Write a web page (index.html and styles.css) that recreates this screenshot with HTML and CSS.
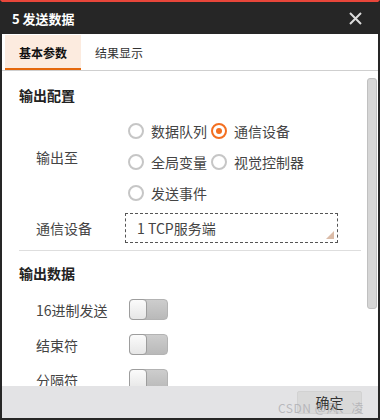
FILE: index.html
```html
<!DOCTYPE html>
<html lang="zh-CN">
<head>
    <meta charset="UTF-8">
    <title>5 发送数据</title>
    <link rel="stylesheet" href="styles.css">
</head>
<body>
    <div class="dialog">
        <div class="titlebar">
            <span class="title">5 发送数据</span>
            <svg class="close" width="13" height="13" viewBox="0 0 13 13">
                <path d="M1 1 L12 12 M12 1 L1 12" stroke="#dcdcdc" stroke-width="2" fill="none"/>
            </svg>
        </div>

        <div class="tabs">
            <div class="tab active">基本参数</div>
            <div class="tab">结果显示</div>
        </div>

        <div class="content">
            <div class="main">
                <div class="section-title">输出配置</div>

                <div class="field">
                    <div class="label">输出至</div>
                    <div class="radios">
                        <div class="radio"><span class="dot"></span>数据队列</div>
                        <div class="radio checked"><span class="dot"></span>通信设备</div>
                        <div class="radio"><span class="dot"></span>全局变量</div>
                        <div class="radio"><span class="dot"></span>视觉控制器</div>
                        <div class="radio"><span class="dot"></span>发送事件</div>
                    </div>
                </div>

                <div class="field select-row">
                    <div class="label">通信设备</div>
                    <div class="select">
                        <span>1 TCP服务端</span>
                        <span class="corner"></span>
                    </div>
                </div>

                <div class="divider"></div>

                <div class="section-title second">输出数据</div>

                <div class="toggles">
                    <div class="field toggle-row">
                        <div class="label">16进制发送</div>
                        <div class="toggle"><span class="knob"></span></div>
                    </div>
                    <div class="field toggle-row">
                        <div class="label">结束符</div>
                        <div class="toggle"><span class="knob"></span></div>
                    </div>
                    <div class="field toggle-row">
                        <div class="label">分隔符</div>
                        <div class="toggle"><span class="knob"></span></div>
                    </div>
                </div>
            </div>
            <div class="scrollbar"><div class="thumb"></div></div>
        </div>

        <div class="footer">
            <button class="ok">确定</button>
            <span class="watermark">CSDN @风、凌</span>
        </div>
    </div>
</body>
</html>
```

FILE: styles.css
```css
body {
    margin: 0;
    font-family: "Noto Sans CJK SC", "Noto Sans", sans-serif;
    color: #444;
    background: #fff;
}
.dialog {
    width: 380px;
    height: 420px;
    box-sizing: border-box;
    border: 2px solid #262626;
    border-top-color: #e8463a;
    display: flex;
    flex-direction: column;
    overflow: hidden;
}
.titlebar {
    height: 32px;
    flex-shrink: 0;
    background: #262626;
    color: #fff;
    display: flex;
    align-items: center;
    justify-content: space-between;
    padding: 0 16px 0 10px;
}
.title {
    font-size: 13px;
    font-weight: bold;
}
.close {
    display: block;
    margin-top: 1px;
}

.tabs {
    height: 36px;
    flex-shrink: 0;
    display: flex;
    padding-left: 3px;
    border-bottom: 1px solid #cfcfcf;
}
.tab {
    width: 76px;
    display: flex;
    align-items: center;
    justify-content: center;
    font-size: 12px;
    color: #333;
    margin-top: 1px;
    box-sizing: border-box;
}
.tab.active {
    background: #fcebdf;
    border-bottom: 2px solid #e5680c;
    color: #111;
    font-weight: bold;
    padding-top: 2px;
}

.content {
    flex: 1;
    display: flex;
    overflow: hidden;
}
.main {
    flex: 1;
    padding: 14px 4px 0 17px;
}
.section-title {
    height: 20px;
    line-height: 20px;
    font-size: 14px;
    font-weight: bold;
    color: #222;
}
.section-title.second {
    margin-top: 12px;
}
.field {
    display: flex;
    align-items: center;
    font-size: 14px;
}
.label {
    width: 89px;
    padding-left: 17px;
    flex-shrink: 0;
    color: #444;
}
.radios {
    margin-top: 10px;
    display: grid;
    grid-template-columns: 83px 83px;
    grid-auto-rows: 31px;
    padding-left: 3px;
}
.radio {
    display: flex;
    align-items: center;
    gap: 7px;
    white-space: nowrap;
    color: #444;
}
.dot {
    width: 16px;
    height: 16px;
    box-sizing: border-box;
    border: 2px solid #c6c6c6;
    border-radius: 50%;
    background: #fff;
    flex-shrink: 0;
    display: flex;
    align-items: center;
    justify-content: center;
}
.radio.checked .dot {
    border-color: #f36f21;
}
.radio.checked .dot::after {
    content: "";
    width: 6px;
    height: 6px;
    border-radius: 50%;
    background: #f36f21;
}

.select-row {
    margin-top: 5px;
}
.select {
    width: 213px;
    height: 30px;
    box-sizing: border-box;
    border: 1px dashed #555;
    display: flex;
    align-items: center;
    justify-content: space-between;
    padding-left: 11px;
    color: #444;
}
.corner {
    align-self: flex-end;
    width: 0;
    height: 0;
    border-left: 8px solid transparent;
    border-bottom: 8px solid #dbbca8;
    margin: 0 3px 3px 0;
}
.divider {
    height: 1px;
    background: #dedede;
    margin-top: 7px;
}

.toggles {
    margin-top: 9px;
}
.toggle-row {
    height: 35px;
}
.toggle {
    width: 39px;
    height: 21px;
    box-sizing: border-box;
    margin-left: 4px;
    border: 1px solid #b3b3b3;
    border-radius: 4px;
    background: linear-gradient(#cdcdcd, #b9b9b9);
    display: flex;
}
.knob {
    width: 18px;
    height: 21px;
    margin: -1px 0 0 -1px;
    box-sizing: border-box;
    border: 1px solid #9d9d9d;
    border-radius: 4px;
    background: linear-gradient(#fbfbfb, #e6e6e6);
}

.scrollbar {
    width: 13px;
    flex-shrink: 0;
    padding-top: 7px;
}
.thumb {
    width: 10px;
    height: 231px;
    margin-left: 2px;
    box-sizing: border-box;
    background: #d6d6d6;
    border: 1px solid #c0c0c0;
    border-radius: 3px;
}

.footer {
    height: 32px;
    flex-shrink: 0;
    background: #e3e3e5;
    display: flex;
    align-items: center;
    justify-content: flex-end;
    padding-right: 16px;
    position: relative;
}
.ok {
    width: 65px;
    height: 23px;
    border: 1px solid #d2d2d2;
    border-radius: 2px;
    background: #d9d9d9;
    font-family: inherit;
    font-size: 14px;
    color: #333;
    padding: 0;
}
.watermark {
    position: absolute;
    right: 14px;
    top: 13px;
    font-size: 12px;
    color: rgba(170, 170, 175, 0.75);
    letter-spacing: 0.5px;
}
```
